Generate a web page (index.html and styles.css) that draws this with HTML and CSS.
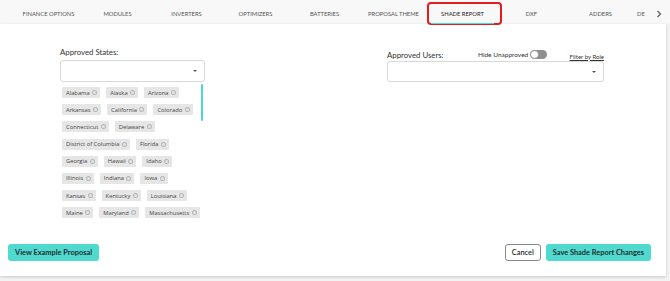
FILE: index.html
```html
<!DOCTYPE html>
<html>
<head>
<meta charset="utf-8">
<link rel="stylesheet" href="styles.css">
</head>
<body>
<div class="page">
  <nav class="tabs">
    <div class="tab">FINANCE OPTIONS</div>
    <div class="tab">MODULES</div>
    <div class="tab">INVERTERS</div>
    <div class="tab">OPTIMIZERS</div>
    <div class="tab">BATTERIES</div>
    <div class="tab">PROPOSAL THEME</div>
    <div class="tab active">SHADE REPORT<span class="highlight"></span></div>
    <div class="tab">DXF</div>
    <div class="tab">ADDERS</div>
    <div class="tab tab-cut">DE</div>
    <div class="tab-arrow"><svg width="6" height="8" viewBox="0 0 6 8"><path d="M1.5 1 L4.5 4 L1.5 7" fill="none" stroke="#555" stroke-width="1.1"/></svg></div>
  </nav>
  <main class="card">
    <div class="columns">
      <section class="col-left">
        <label class="field-label">Approved States:</label>
        <div class="select"><span class="caret"></span></div>
        <div class="chips-wrap">
          <div class="chips">
            <span class="chip">Alabama<i class="x"></i></span>
            <span class="chip">Alaska<i class="x"></i></span>
            <span class="chip">Arizona<i class="x"></i></span>
            <span class="chip">Arkansas<i class="x"></i></span>
            <span class="chip">California<i class="x"></i></span>
            <span class="chip">Colorado<i class="x"></i></span>
            <span class="chip">Connecticut<i class="x"></i></span>
            <span class="chip">Delaware<i class="x"></i></span>
            <span class="chip">District of Columbia<i class="x"></i></span>
            <span class="chip">Florida<i class="x"></i></span>
            <span class="chip">Georgia<i class="x"></i></span>
            <span class="chip">Hawaii<i class="x"></i></span>
            <span class="chip">Idaho<i class="x"></i></span>
            <span class="chip">Illinois<i class="x"></i></span>
            <span class="chip">Indiana<i class="x"></i></span>
            <span class="chip">Iowa<i class="x"></i></span>
            <span class="chip">Kansas<i class="x"></i></span>
            <span class="chip">Kentucky<i class="x"></i></span>
            <span class="chip">Louisiana<i class="x"></i></span>
            <span class="chip">Maine<i class="x"></i></span>
            <span class="chip">Maryland<i class="x"></i></span>
            <span class="chip">Massachusetts<i class="x"></i></span>
          </div>
          <span class="scroll-thumb"></span>
        </div>
      </section>
      <section class="col-right">
        <div class="right-head">
          <label class="field-label">Approved Users:</label>
          <div class="hide-toggle">
            <span>Hide Unapproved</span>
            <span class="switch"><span class="knob"></span></span>
          </div>
          <a class="filter-link">Filter by Role</a>
        </div>
        <div class="select wide"><span class="caret"></span></div>
      </section>
    </div>
    <footer class="actions">
      <button class="btn primary">View Example Proposal</button>
      <div class="actions-right">
        <button class="btn outline">Cancel</button>
        <button class="btn primary">Save Shade Report Changes</button>
      </div>
    </footer>
  </main>
</div>
</body>
</html>
```
FILE: styles.css
```css
* { box-sizing: border-box; }
html, body { margin: 0; padding: 0; }
body {
  width: 670px;
  height: 281px;
  overflow: hidden;
  background: #ececec;
  font-family: "Lato", "Inter", sans-serif;
  color: #333;
}
.page {
  width: 670px;
  height: 281px;
  background: #f3f3f3;
}
.tabs {
  height: 24px;
  display: flex;
  align-items: stretch;
  padding-left: 14px;
  background: #f8f8f8;
}
.tab {
  position: relative;
  width: 69px;
  flex: none;
  display: flex;
  align-items: center;
  justify-content: center;
  font-size: 5.8px;
  color: #555;
  padding-top: 3px;
}
.tab.active {
  color: #222;
}
.tab.active::after {
  content: "";
  position: absolute;
  left: 3px;
  right: 3px;
  bottom: 0;
  height: 1px;
  background: #4fd8cf;
}
.tab .highlight {
  position: absolute;
  left: -1px;
  right: -5px;
  top: 2px;
  bottom: -1px;
  border: 2px solid #e01e1e;
  border-radius: 4px;
}
.tab-cut {
  width: 18px;
  justify-content: flex-start;
  padding-left: 2px;
}
.tab-arrow {
  display: flex;
  align-items: center;
  padding-top: 3px;
  padding-left: 3px;
}
.card {
  width: 666px;
  height: 252px;
  background: #fff;
  box-shadow: 0 1px 3px rgba(0,0,0,0.18);
  display: flex;
  flex-direction: column;
  justify-content: space-between;
  padding: 24px 0 15px 8px;
}
.columns {
  display: flex;
  padding-left: 52px;
}
.col-left {
  width: 145px;
}
.col-right {
  width: 217px;
  margin-left: 182px;
}
.field-label {
  display: block;
  font-size: 7.8px;
  color: #333;
  height: 12px;
  line-height: 9px;
}
.select {
  position: relative;
  height: 22px;
  border: 1px solid #d8d8d8;
  border-radius: 3px;
  background: #fff;
}
.caret {
  position: absolute;
  right: 7px;
  top: 9px;
  width: 0;
  height: 0;
  border-left: 2px solid transparent;
  border-right: 2px solid transparent;
  border-top: 2px solid #555;
}
.chips-wrap {
  position: relative;
  height: 140px;
  padding-top: 5px;
}
.chips {
  display: flex;
  flex-wrap: wrap;
  column-gap: 6px;
  row-gap: 6.2px;
  padding-left: 2px;
  width: 143px;
}
.chip {
  display: inline-flex;
  align-items: center;
  height: 11px;
  padding: 0 3px 0 4px;
  background: #e6e6e6;
  border-radius: 1px;
  font-family: "Open Sans", "Noto Sans", sans-serif;
  font-size: 5.8px;
  color: #444;
  white-space: nowrap;
}
.chip .x {
  width: 5px;
  height: 5px;
  margin-left: 2.5px;
  border-radius: 50%;
  background: #b5b5b5;
  position: relative;
}
.chip .x::after {
  content: "";
  position: absolute;
  left: 1px;
  top: 1px;
  width: 3px;
  height: 3px;
  border-radius: 50%;
  background: #e6e6e6;
}
.scroll-thumb {
  position: absolute;
  right: 2px;
  top: 2px;
  width: 2px;
  height: 37px;
  background: #4fd8cf;
  border-radius: 1px;
}
.right-head {
  display: flex;
  align-items: center;
  height: 13px;
}
.right-head .field-label {
  width: 91px;
  height: auto;
  margin-top: 2px;
}
.hide-toggle {
  display: flex;
  align-items: center;
  font-size: 6.5px;
  color: #333;
  gap: 2px;
}
.switch {
  position: relative;
  width: 17px;
  height: 9px;
  background: #8f8f8f;
  border-radius: 5px;
}
.knob {
  position: absolute;
  left: 0;
  top: 0;
  width: 9px;
  height: 9px;
  border-radius: 50%;
  background: #fff;
  border: 1px solid #999;
}
.filter-link {
  margin-left: auto;
  font-size: 6px;
  color: #333;
  text-decoration: underline;
  margin-top: 3px;
}
.select.wide {
  height: 21px;
  margin-top: 0;
}
.actions {
  display: flex;
  justify-content: space-between;
  align-items: center;
  padding-right: 15px;
}
.actions-right {
  display: flex;
  gap: 5px;
}
.btn {
  font-family: "Lato", "Inter", sans-serif;
  font-weight: 700;
  font-size: 7.4px;
  height: 17px;
  border-radius: 3px;
  padding: 0 7px;
  cursor: pointer;
  color: #1f2d2c;
}
.btn.primary {
  background: #4fd9cf;
  border: none;
}
.btn.outline {
  background: #fff;
  border: 1px solid #888;
  font-weight: 600;
  padding: 0 6px;
}
```
